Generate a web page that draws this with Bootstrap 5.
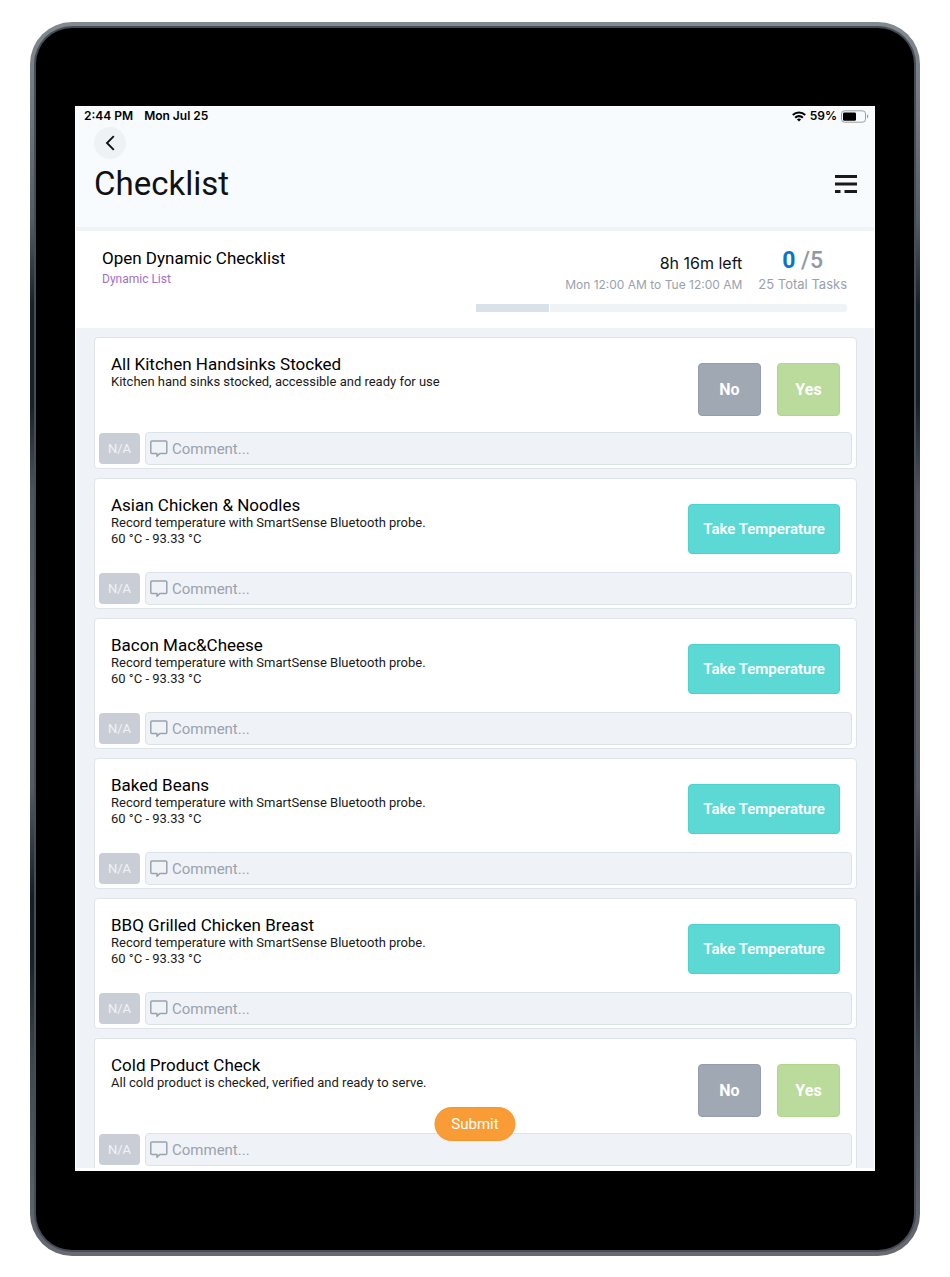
<!DOCTYPE html>
<html lang="en">
<head>
<meta charset="utf-8">
<meta name="viewport" content="width=device-width, initial-scale=1">
<title>Checklist</title>
<link href="https://cdn.jsdelivr.net/npm/bootstrap@5.3.0/dist/css/bootstrap.min.css" rel="stylesheet">
<style>
  body { font-family: Roboto, "Liberation Sans", sans-serif; color: #111; background: #fff; padding: 22px 30px 21px; }
  .device { border-radius: 42px; padding: 6px; background: linear-gradient(#838a8f, #777e83 5%, #545c64 16%, #18212a 23%, #18212a 31%, #4d545a 38%, #5c6164 50%, #555b60 62%, #151d24 71%, #18212a 76%, #3d454f 84%, #59606a 95%, #6b6a71); }
  .bezel { background: #000; border-radius: 36px; padding: 78px 39px 79px; box-shadow: 0 0 0 2px #454c56; }
  .screen { background: #fff; padding: 1px 1px 3px; }
  .ui-font { font-family: Inter, Roboto, sans-serif; }

  .app-header { background: #f7fbfe; border-bottom: 4px solid #eff3f6; padding: 0 17px 23px 18px; }
  .status { font-size: 12px; line-height: 18px; font-weight: 600; color: #000; margin: 0 -12px 2px -10px; }
  .status-time { gap: 11px; }
  .back { width: 32px; height: 32px; background: #eff2f5; }
  .title-row { padding-top: 5px; }
  .page-title { font-size: 33px; line-height: 40px; font-weight: 400; }

  .summary { padding: 14px 27px 16px 26px; }
  .summary-name { padding-top: 3px; }
  .summary-due { padding-top: 6px; }
  .summary-count { padding-top: 3px; }
  .item-title { font-size: 17px; line-height: 20px; font-weight: 400; color: #000; margin: 0; }
  .kind { font-size: 12px; line-height: 22px; color: #a26fc8; }
  .left-time { font-size: 16px; line-height: 24px; }
  .muted-sm { font-size: 12px; line-height: 20px; color: #99a1ad; }
  .muted-md { font-size: 13px; line-height: 20px; color: #99a1ad; }
  .count { font-family: Roboto, sans-serif; font-size: 23px; line-height: 26px; font-weight: 500; color: #8f98a5; }
  .count b { color: #0a74c7; font-weight: 700; }
  .meter { width: 371px; height: 8px; margin-top: 9px; border-radius: 0 3px 3px 0; background: #eff3f6; }
  .meter .progress-bar { background: #dae2e9; border-right: 1px solid #fff; }

  .tasks { background: #eff3f7; padding: 9px 17px 0 18px; gap: 9px; }
  .task { background: #fff; border: 1px solid #dde5ea; border-radius: 4px; padding: 0 4px 3px; }
  .task:last-child { border-bottom: 0; border-radius: 4px 4px 0 0; padding-bottom: 2px; }
  .task-body { min-height: 93px; padding: 0 12px; }
  .task-body.tall { min-height: 94px; }
  .task-text { padding-top: 16px; }
  .note { font-size: 13px; line-height: 16px; color: #1a1a1a; margin: 0; }
  .answers { padding-top: 25px; gap: 16px; }
  .answer { border-radius: 4px; font-weight: 600; color: #fff; border: 1px solid; padding: 0; }
  .answer.yn { width: 63px; height: 53px; font-size: 16px; font-weight: 700; }
  .answer.no { background: #a0a8b3; border-color: #949daa; }
  .answer.yes { background: #badb9b; border-color: #b0d68c; }
  .answer.temp { width: 152px; height: 50px; font-size: 15px; background: #5cd9d5; border-color: #4cd2ce; }
  .reply { gap: 5px; }
  .na { width: 41px; height: 31px; background: #c9ced6; color: #f1f3f6; border: 0; border-radius: 4px; font-size: 13px; padding: 0; }
  .comment { height: 33px; border: 1px solid #dae3e9; border-radius: 4px; background: #eff3f7; padding: 0 4px; gap: 4px; }
  .comment .form-control { background: transparent; border: 0; padding: 0; font-size: 15px; line-height: 20px; box-shadow: none; }
  .comment .form-control::placeholder { color: #9aa2ae; opacity: 1; }
  .submit { bottom: 30px; width: 81px; height: 34px; border-radius: 17px; border: 1px solid #f7952a; background: #f99c35; color: #fff; font-size: 15px; padding: 0; }
</style>
</head>
<body>
<svg width="0" height="0" class="position-absolute" aria-hidden="true">
  <symbol id="bubble" viewBox="0 0 18 18"><path d="M1.800 1h14a1 1 0 0 1 1 1v10.500a1 1 0 0 1-1 1H9.800L7 16.200v-2.700H1.800a1 1 0 0 1-1-1V2a1 1 0 0 1 1-1z" fill="none" stroke="#99a2ae" stroke-width="1.5" stroke-linejoin="round"/></symbol>
</svg>
<div class="device">
<div class="bezel">
<div class="screen position-relative">
  <header class="app-header">
    <div class="status ui-font d-flex justify-content-between align-items-center">
      <div class="status-time d-flex"><span>2:44 PM</span><span>Mon Jul 25</span></div>
      <div class="d-flex align-items-center gap-1">
        <svg width="14" height="11" viewBox="0 0 14 11" aria-hidden="true"><g fill="none" stroke="#000" stroke-width="2.100"><path d="M.8 4.100a8.800 8.800 0 0 1 12.400 0"/><path d="M3.200 6.700a5.400 5.400 0 0 1 7.600 0"/></g><path d="M7 10.600 4.900 8.500a3 3 0 0 1 4.200 0z"/></svg>
        <span>59%</span>
        <svg width="28" height="13" viewBox="0 0 28 13" aria-hidden="true"><rect x=".5" y=".8" width="24" height="11.400" rx="3" fill="none" stroke="#9a9da0"/><rect x="2" y="2.400" width="13" height="8.400" rx="1.400"/><path d="M26 4.600v3.800c1.800-.6 1.800-3.200 0-3.800z" fill="#9a9da0"/></svg>
      </div>
    </div>
    <button type="button" class="back btn rounded-circle p-0 d-flex align-items-center justify-content-center" aria-label="Back">
      <svg width="12" height="16" viewBox="0 0 12 16" fill="none" stroke="#111" stroke-width="1.900" aria-hidden="true"><path d="M9.800 1.200 3 8l6.800 6.800"/></svg>
    </button>
    <div class="title-row d-flex justify-content-between align-items-center">
      <h1 class="page-title m-0">Checklist</h1>
      <button type="button" class="btn p-0 border-0 lh-1" aria-label="Menu">
        <svg width="22" height="18" viewBox="0 0 22 18" class="d-block" aria-hidden="true"><path d="M0 0h22v3H0zM0 7.500h22v3H0zM0 15h5.500v3H0zM9.500 15H22v3H9.500z" fill="#1a1a1a"/></svg>
      </button>
    </div>
  </header>

  <section class="summary">
    <div class="d-flex justify-content-between">
      <div class="summary-name">
        <h2 class="item-title">Open Dynamic Checklist</h2>
        <div class="kind">Dynamic List</div>
      </div>
      <div class="d-flex ui-font gap-3">
        <div class="summary-due text-end">
          <div class="left-time">8h 16m left</div>
          <div class="muted-sm">Mon 12:00 AM to Tue 12:00 AM</div>
        </div>
        <div class="summary-count text-center">
          <div class="count"><b>0</b> /5</div>
          <div class="muted-md">25 Total Tasks</div>
        </div>
      </div>
    </div>
    <div class="meter progress ms-auto" role="progressbar" aria-label="Time elapsed" aria-valuenow="20" aria-valuemin="0" aria-valuemax="100"><div class="progress-bar" style="width:20%"></div></div>
  </section>

  <main class="tasks d-flex flex-column" id="tasks"></main>
  <button type="button" class="submit btn position-absolute start-50 translate-middle-x">Submit</button>
</div>
</div>
</div>
<script>
  const probe = ["Record temperature with SmartSense Bluetooth probe.", "60 °C - 93.33 °C"];
  const tasks = [
    ["All Kitchen Handsinks Stocked", ["Kitchen hand sinks stocked, accessible and ready for use"], "yn"],
    ["Asian Chicken &amp; Noodles", probe, "temp"],
    ["Bacon Mac&amp;Cheese", probe, "temp"],
    ["Baked Beans", probe, "temp"],
    ["BBQ Grilled Chicken Breast", probe, "temp"],
    ["Cold Product Check", ["All cold product is checked, verified and ready to serve."], "yn"]
  ];
  const answers = {
    yn: '<button type="button" class="answer yn no">No</button><button type="button" class="answer yn yes">Yes</button>',
    temp: '<button type="button" class="answer temp">Take Temperature</button>'
  };
  document.getElementById("tasks").innerHTML = tasks.map(([title, notes, kind], i) => `
    <article class="task">
      <div class="task-body d-flex justify-content-between ${kind === "yn" ? "tall" : ""}">
        <div class="task-text"><h3 class="item-title">${title}</h3>${notes.map(n => `<p class="note">${n}</p>`).join("")}</div>
        <div class="answers d-flex align-items-start">${answers[kind]}</div>
      </div>
      <div class="reply d-flex align-items-center">
        <button type="button" class="na">N/A</button>
        <label class="comment d-flex align-items-center flex-grow-1" for="comment${i}">
          <svg width="18" height="18" class="flex-shrink-0" aria-hidden="true"><use href="#bubble"/></svg>
          <input class="form-control" id="comment${i}" type="text" placeholder="Comment..." aria-label="Comment">
        </label>
      </div>
    </article>`).join("");
</script>
<script src="https://cdn.jsdelivr.net/npm/bootstrap@5.3.0/dist/js/bootstrap.bundle.min.js"></script>
</body>
</html>
